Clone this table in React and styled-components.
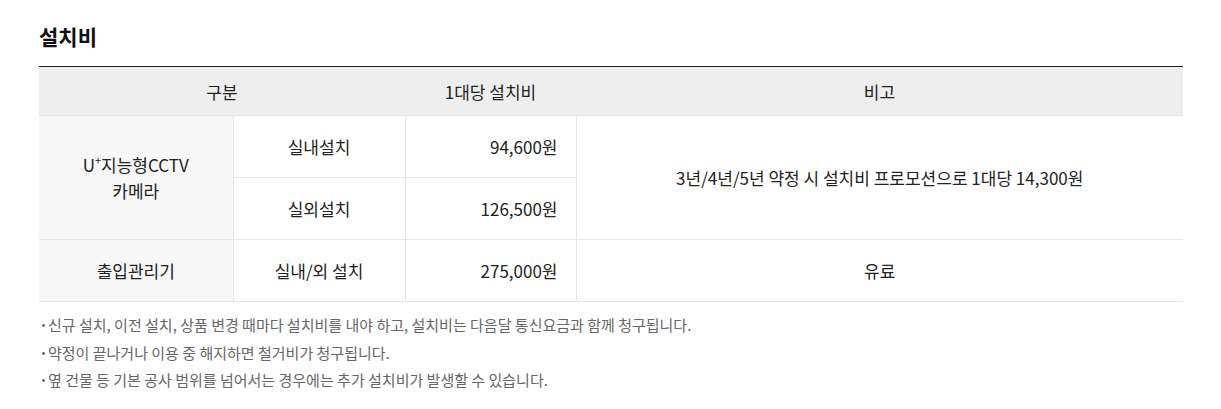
import React from 'react';
import styled, { createGlobalStyle } from 'styled-components';

const GlobalStyle = createGlobalStyle`
	body {
		margin: 0;
		background: #fff;
		font-family: 'Noto Sans CJK KR', 'Noto Sans', sans-serif;
		color: #222;
	}
`;

const notes = [
	'신규 설치, 이전 설치, 상품 변경 때마다 설치비를 내야 하고, 설치비는 다음달 통신요금과 함께 청구됩니다.',
	'약정이 끝나거나 이용 중 해지하면 철거비가 청구됩니다.',
	'옆 건물 등 기본 공사 범위를 넘어서는 경우에는 추가 설치비가 발생할 수 있습니다.',
];

function App() {
	return (
		<Page>
			<GlobalStyle />
			<Title>설치비</Title>
			<Table>
				<colgroup>
					<col style={{ width: 194 }} />
					<col style={{ width: 172 }} />
					<col style={{ width: 171 }} />
					<col />
				</colgroup>
				<thead>
					<tr>
						<Th colSpan={2}>구분</Th>
						<Th>1대당 설치비</Th>
						<Th>비고</Th>
					</tr>
				</thead>
				<tbody>
					<tr>
						<Td rowSpan={2} head>
							U<sup>+</sup>지능형CCTV
							<br />
							카메라
						</Td>
						<Td>실내설치</Td>
						<Td price>94,600원</Td>
						<Td rowSpan={2}>3년/4년/5년 약정 시 설치비 프로모션으로 1대당 14,300원</Td>
					</tr>
					<tr>
						<Td>실외설치</Td>
						<Td price>126,500원</Td>
					</tr>
					<tr>
						<Td head>출입관리기</Td>
						<Td>실내/외 설치</Td>
						<Td price>275,000원</Td>
						<Td>유료</Td>
					</tr>
				</tbody>
			</Table>
			<Notes>
				{notes.map((n) => (
					<Note key={n}>{n}</Note>
				))}
			</Notes>
		</Page>
	);
}

const Page = styled.div`
	padding: 22px 38px 0 39px;
`;

const Title = styled.h2`
	margin: 0 0 16px;
	font-size: 21px;
	line-height: 28px;
	font-weight: 700;
	color: #111;
`;

const Table = styled.table`
	width: 100%;
	border-collapse: collapse;
	table-layout: fixed;
	border-top: 1px solid #222;
	font-size: 17px;
	color: #222;
`;

const Th = styled.th`
	height: 48px;
	padding: 0;
	background: #eeeeee;
	font-weight: 400;
	text-align: center;
`;

const Td = styled.td`
	height: 61px;
	padding: 0 18px;
	border: 1px solid #e6e6e6;
	border-left: ${(p) => (p.head ? 'none' : '1px solid #e6e6e6')};
	text-align: ${(p) => (p.price ? 'right' : 'center')};
	background: ${(p) => (p.head ? '#f7f7f7' : '#fff')};
	line-height: 26px;

	&:last-child {
		border-right: none;
	}

	sup {
		font-size: 11px;
		vertical-align: top;
		line-height: 16px;
	}
`;

const Notes = styled.ul`
	margin: 9px 0 0;
	padding: 0;
	list-style: none;
`;

const Note = styled.li`
	position: relative;
	padding-left: 9px;
	font-size: 15px;
	line-height: 27.5px;
	color: #666;

	&::before {
		content: '·';
		position: absolute;
		left: 0;
		top: 0;
		font-weight: 700;
	}
`;

export default App;
